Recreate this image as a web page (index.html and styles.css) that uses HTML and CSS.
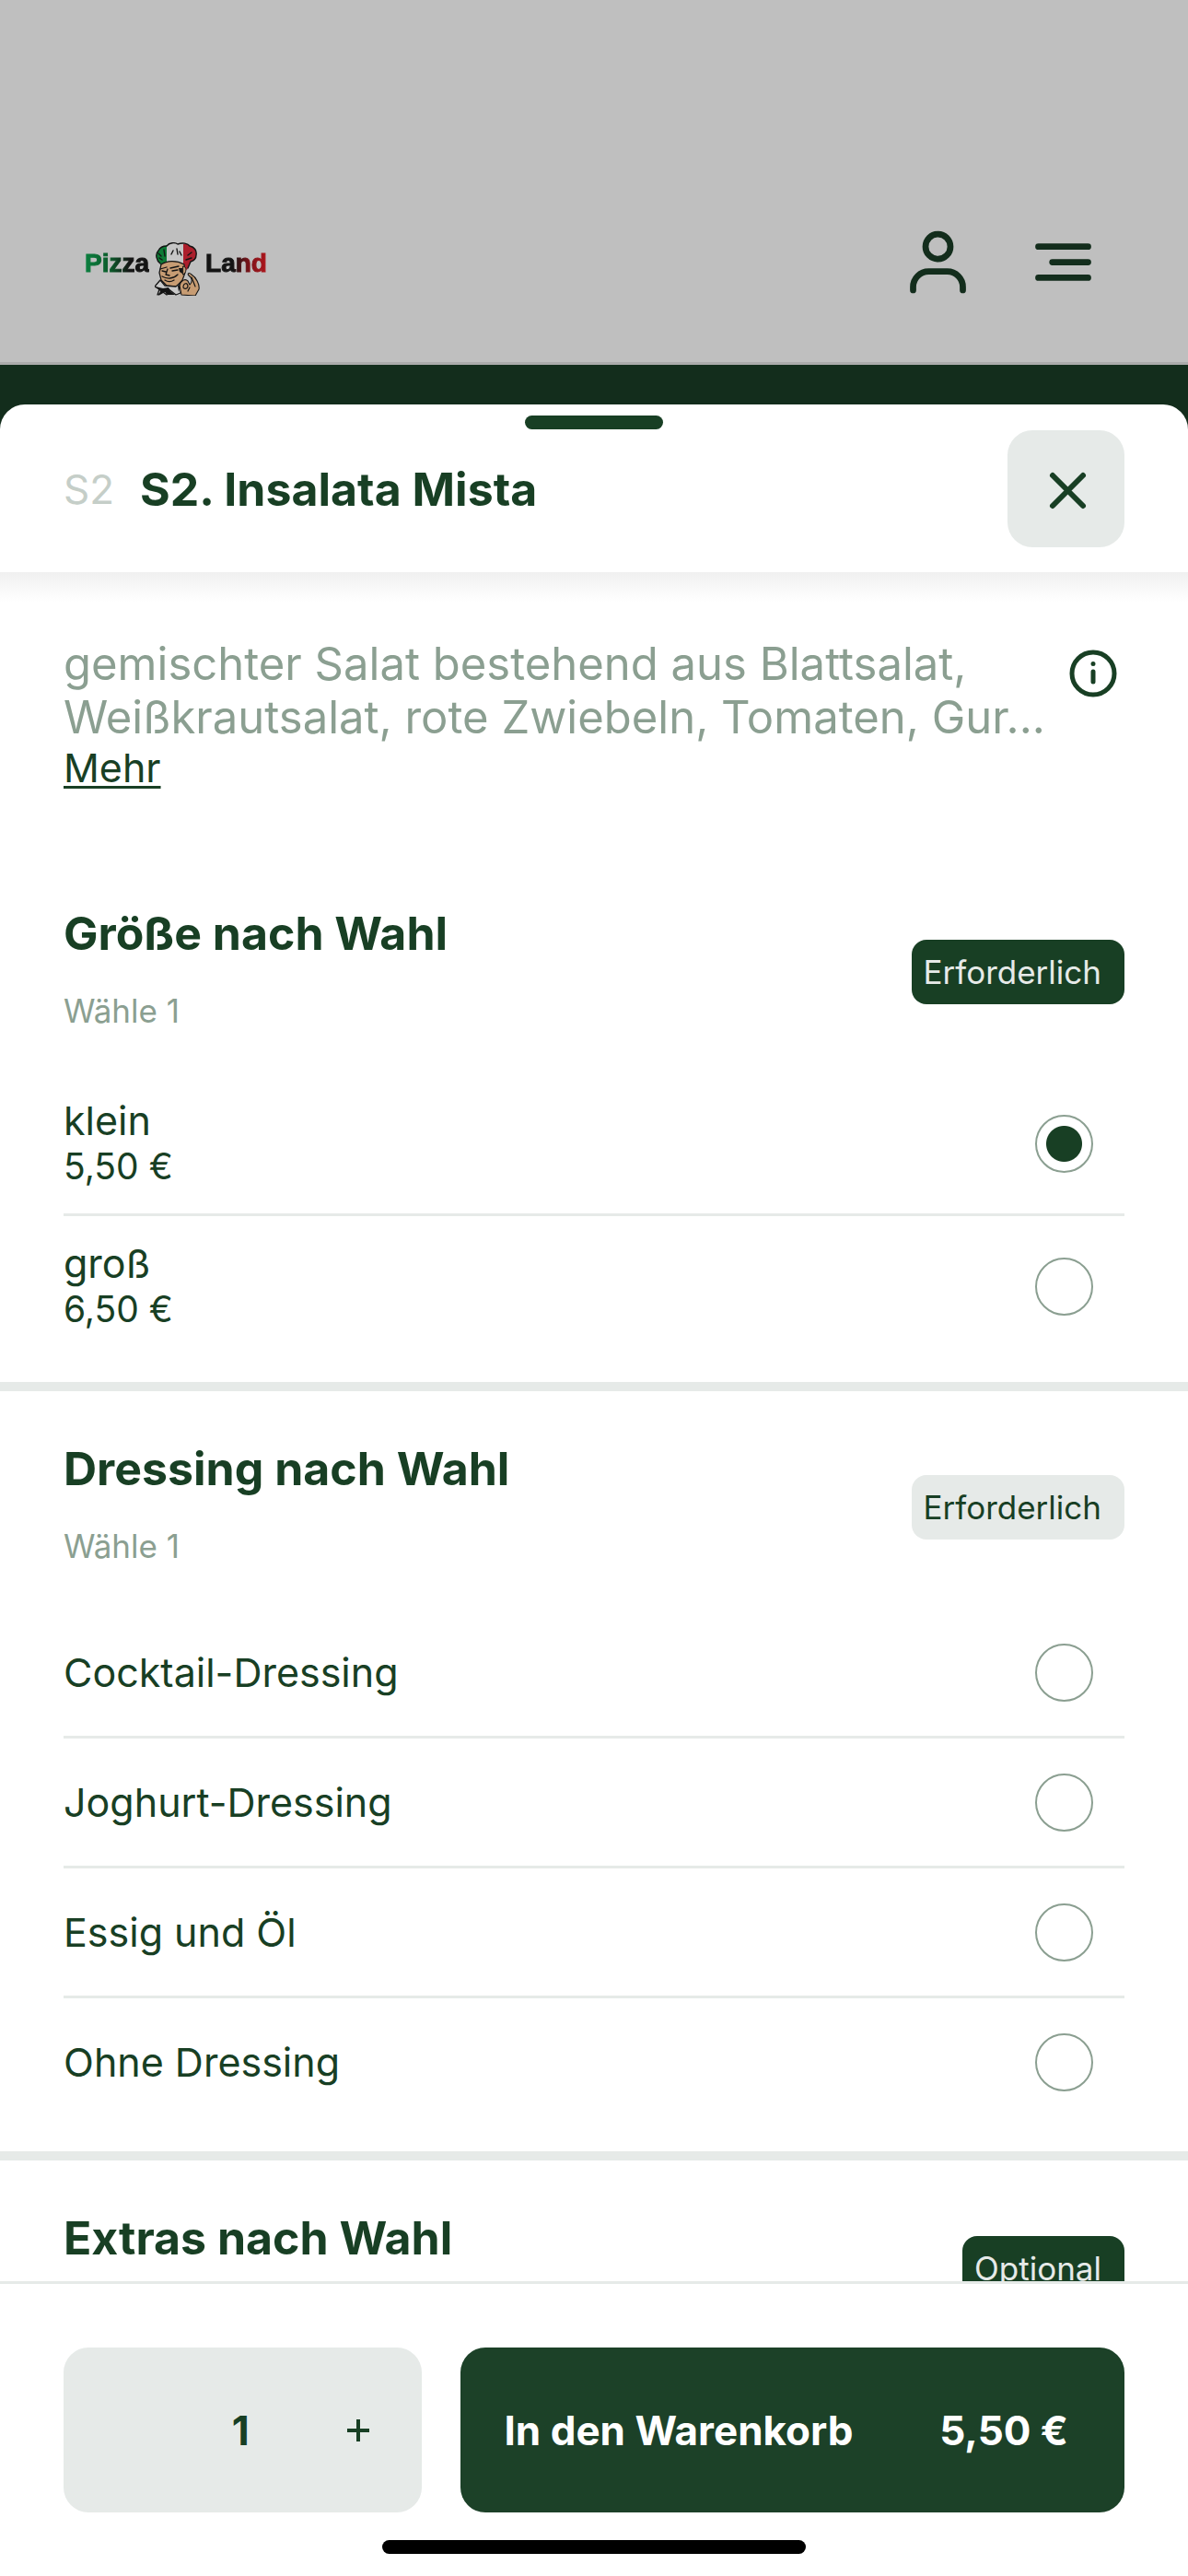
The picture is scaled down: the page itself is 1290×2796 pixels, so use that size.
FILE: index.html
```html
<!DOCTYPE html>
<html lang="de">

<head>
    <meta charset="UTF-8">
    <meta name="viewport" content="width=device-width, initial-scale=1.0">
    <title>Pizza Land</title>
    <link rel="stylesheet" href="styles.css">
</head>

<body>
    <header class="topbar">
        <a class="logo" href="#">
            <span class="logo-pizza">Pizza</span>
            <svg class="logo-chef" viewBox="0 0 49 58" aria-hidden="true">
                <!-- hat -->
                <path d="M6 23C2 20 0 13 4 9c2-4 6-5 9-5 3-4 9-4 12-2 5-2 11-1 13 2 5 1 8 5 7 10 0 4-3 6-6 7l-4 9-13-2-17 2z" fill="#c6c6c6" />
                <path d="M6 23C2 20 0 13 4 9c2-4 6-5 9-6v18l-1 1v8H7z" fill="#0c7a35" />
                <path d="M31 2c4-1 6 0 7 2 5 1 8 5 7 10 0 4-3 6-6 7l-4 9-4-2z" fill="#ac1f2c" />
                <path d="M6 23C2 20 0 13 4 9c2-4 6-5 9-5 3-4 9-4 12-2 5-2 11-1 13 2 5 1 8 5 7 10 0 4-3 6-6 7l-3 7M4 12l3 3M5 17l3 2M10 8l1 7M20 9l-2 4M24 7l1 6M27 10l2 4M40 11l-4 3M40 17l-6 2" fill="none" stroke="#141414" stroke-width="1.4" />
                <!-- face -->
                <path d="M7 24c6-4 16-5 25 0l1 9-3 8-6 7-11-1-6-6-2-8z" fill="#c79c73" stroke="#141414" stroke-width="1.2" />
                <path d="M31 26c4 0 4 7 0 9z" fill="#c79c73" stroke="#141414" />
                <path d="M6 29l7-2M17 28l9-2M8 31l4 1M19 31l6-1M14 29l-2 6 4 1M8 37c5 3 12 3 17-2M11 41c3 2 7 2 10 0" fill="none" stroke="#141414" stroke-width="1.3" />
                <path d="M26 28h4v6l-3-2z" fill="#141414" />
                <!-- collar -->
                <path d="M6 41l-6 7 5 3-2 6 6-3 4 3 1-7 9 7 5-2 2-13-7 6-12-1z" fill="#c9c9c9" stroke="#141414" stroke-width="1.3" />
                <path d="M1 48l8 2 6-1 2 4 5 4h-8l-3-3-7 4 2-5zM25 47l4-2-3 9z" fill="#141414" />
                <!-- hand -->
                <path d="M29 57l-2-10c2-6 6-8 9-5l2 4c3-3 3-7-1-10-2-2 0-4 3-1 5 3 9 11 8 16l-4 7z" fill="#c79c73" stroke="#141414" stroke-width="1.1" />
                <path d="M31 49c0-5 5-6 5-1-1 3-4 3-5 1zM40 38l4 10M38 49l-2 4" fill="none" stroke="#141414" stroke-width="1.2" />
            </svg>
            <span class="logo-land">Land</span>
        </a>
        <nav class="topbar-nav">
            <button class="icon-btn" type="button" aria-label="Konto">
                <svg viewBox="0 0 24 24"><circle cx="12" cy="7" r="4" /><path d="M4 21v-1a5 5 0 0 1 5-5h6a5 5 0 0 1 5 5v1" /></svg>
            </button>
            <button class="icon-btn" type="button" aria-label="Menü">
                <svg viewBox="0 0 24 24"><path d="M4 7h16M8.500 12H20M4 17h16" /></svg>
            </button>
        </nav>
    </header>

    <main class="sheet">
        <div class="sheet-head">
            <span class="handle"></span>
            <span class="item-no">S2</span>
            <h1>S2. Insalata Mista</h1>
            <button class="close" type="button" aria-label="Schließen">
                <svg viewBox="0 0 60 60"><path d="M15 15l33 33M48 15L15 48" /></svg>
            </button>
        </div>

        <div class="sheet-body">
            <div class="desc">
                <div class="desc-text">
                    <p>gemischter Salat bestehend aus Blattsalat, Weißkrautsalat, rote Zwiebeln, Tomaten, Gur...</p>
                    <a href="#">Mehr</a>
                </div>
                <button class="info" type="button" aria-label="Produktinfo">
                    <svg viewBox="0 0 52 52"><circle cx="26" cy="26" r="23" /><path d="M26 24v11M26 15.500v.1" /></svg>
                </button>
            </div>

            <section class="group group-first">
                <div class="group-head">
                    <div>
                        <h2>Größe nach Wahl</h2>
                        <p>Wähle 1</p>
                    </div>
                    <span class="badge badge-dark">Erforderlich</span>
                </div>
                <ul class="options options-price">
                    <li>
                        <label for="klein">klein <span>5,50 €</span></label>
                        <input type="radio" name="groesse" id="klein" checked>
                    </li>
                    <li>
                        <label for="gross">groß <span>6,50 €</span></label>
                        <input type="radio" name="groesse" id="gross">
                    </li>
                </ul>
            </section>

            <section class="group">
                <div class="group-head">
                    <div>
                        <h2>Dressing nach Wahl</h2>
                        <p>Wähle 1</p>
                    </div>
                    <span class="badge">Erforderlich</span>
                </div>
                <ul class="options">
                    <li>
                        <label for="cocktail">Cocktail-Dressing</label>
                        <input type="radio" name="dressing" id="cocktail">
                    </li>
                    <li>
                        <label for="joghurt">Joghurt-Dressing</label>
                        <input type="radio" name="dressing" id="joghurt">
                    </li>
                    <li>
                        <label for="essig">Essig und Öl</label>
                        <input type="radio" name="dressing" id="essig">
                    </li>
                    <li>
                        <label for="ohne">Ohne Dressing</label>
                        <input type="radio" name="dressing" id="ohne">
                    </li>
                </ul>
            </section>

            <section class="group">
                <div class="group-head">
                    <div>
                        <h2>Extras nach Wahl</h2>
                    </div>
                    <span class="badge badge-dark">Optional</span>
                </div>
            </section>
        </div>

        <footer class="cart-bar">
            <div class="cart-row">
                <div class="qty">
                    <button type="button" aria-label="Weniger" disabled></button>
                    <output>1</output>
                    <button type="button" aria-label="Mehr">
                        <svg viewBox="0 0 24 24"><path d="M12 0v24M0 12h24" /></svg>
                    </button>
                </div>
                <button class="add" type="button"><span>In den Warenkorb</span><span>5,50 €</span></button>
            </div>
            <div class="home-bar"></div>
        </footer>
    </main>
</body>

</html>
```
FILE: styles.css
```css
* {
    box-sizing: border-box;
    margin: 0;
    padding: 0;
}

body {
    height: 100vh;
    display: flex;
    flex-direction: column;
    background-color: #132d1c;
    color: #183f24;
    font-family: Inter, "Liberation Sans", sans-serif;
    font-size: 44px;
    line-height: 50px;
}

ul {
    list-style: none;
}

button {
    border: none;
    background: none;
    color: inherit;
    font: inherit;
    cursor: pointer;
}

svg {
    display: block;
    fill: none;
    stroke: currentColor;
    stroke-linecap: round;
    stroke-linejoin: round;
}

/* top bar */
.topbar {
    display: flex;
    justify-content: space-between;
    align-items: flex-end;
    padding: 244px 95px 68px 92px;
    background-color: #bfbfbf;
    border-bottom: 3px solid #ababab;
}

.logo {
    display: flex;
    gap: 6px;
    padding-bottom: 4px;
    font-family: "Liberation Sans", Arial, sans-serif;
    font-size: 28px;
    font-weight: bold;
    line-height: 46px;
    text-decoration: none;
}

.logo span {
    color: transparent;
    background-clip: text;
    -webkit-background-clip: text;
    -webkit-text-stroke: 1px transparent;
}

.logo .logo-pizza {
    background-image: linear-gradient(90deg, #0c8040, #0b5a2a 40%, #141414 70%);
}

.logo .logo-land {
    background-image: linear-gradient(90deg, #141414 45%, #7a1218 70%, #b0151c);
}

.logo-chef {
    width: 49px;
    height: 58px;
    stroke: none;
}

.topbar-nav {
    display: flex;
    gap: 55px;
    color: #132d1c;
}

.icon-btn svg {
    width: 81px;
    height: 81px;
    stroke-width: 2;
}

/* sheet */
.sheet {
    flex: 1;
    min-height: 0;
    display: flex;
    flex-direction: column;
    margin-top: 43px;
    background-color: #fff;
    border-radius: 27px 27px 0 0;
}

.sheet-head {
    position: relative;
    display: flex;
    align-items: center;
    padding: 28px 69px 27px;
}

/* fade under the title row */
.sheet-body {
    flex: 1;
    min-height: 0;
    overflow-y: auto;
    scrollbar-width: none;
    background: linear-gradient(#f0f0f0, #fff 32px);
}

.handle {
    position: absolute;
    top: 12px;
    left: 50%;
    width: 150px;
    height: 15px;
    margin-left: -75px;
    border-radius: 8px;
    background-color: #183f24;
}

.item-no {
    margin-right: 28px;
    color: #c5cec8;
}

h1,
h2 {
    font-size: 50px;
    font-weight: 700;
    line-height: 64px;
}

.close {
    display: flex;
    justify-content: center;
    align-items: center;
    width: 127px;
    height: 127px;
    margin-left: auto;
    border-radius: 27px;
    background-color: #e6eae8;
}

.close svg {
    width: 60px;
    height: 60px;
    stroke-width: 6;
}

.desc {
    display: flex;
    align-items: flex-start;
    padding: 71px 69px;
}

.desc-text {
    flex: 1;
}

.desc p {
    color: #8b9f91;
    font-size: 49px;
    line-height: 58px;
}

.desc a {
    display: block;
    color: inherit;
    font-size: 43px;
    text-decoration-thickness: 3px;
    text-underline-offset: 4px;
}

.info {
    display: flex;
    justify-content: center;
    align-items: center;
    width: 69px;
    height: 78px;
}

.info svg {
    width: 52px;
    height: 52px;
    stroke-width: 5;
}

/* option groups */
.group {
    padding: 52px 69px 28px;
    border-top: 10px solid #e6eae8;
}

.group-first {
    border-top: none;
}

.group-head {
    display: flex;
    justify-content: space-between;
    min-height: 130px;
    margin-bottom: 36px;
}

.group-head p {
    margin-top: 20px;
    color: #8b9f91;
    font-size: 35px;
    line-height: 64px;
}

.badge {
    align-self: center;
    padding: 0 25px 0 13px;
    border-radius: 16px;
    background-color: #e6eae8;
    font-size: 35px;
    line-height: 70px;
}

.badge-dark {
    background-color: #183f24;
    color: #e6eae8;
}

.options li {
    display: flex;
    align-items: center;
    height: 138px;
    padding-right: 34px;
}

.options li + li {
    height: 141px;
    border-top: 3px solid #e6eae8;
}

.options-price li {
    height: 152px;
}

.options-price li + li {
    height: 155px;
}

.options label {
    flex: 1;
    font-size: 43px;
}

.options label span {
    display: block;
    font-size: 39px;
}

.options input {
    appearance: none;
    width: 63px;
    height: 63px;
    border: 2px solid #8b9f91;
    border-radius: 50%;
}

.options input:checked {
    background: radial-gradient(circle, #183f24 19px, #fff 20px);
}

/* bottom bar */
.cart-bar {
    padding: 69px 69px 24px;
    border-top: 3px solid #e6eae8;
    background-color: #fff;
}

.cart-row {
    display: grid;
    grid-template-columns: 7fr 13fr;
    gap: 42px;
    height: 179px;
    font-weight: 700;
}

.qty {
    display: grid;
    grid-template-columns: 1fr 1fr 1fr;
    align-items: center;
    padding-right: 4px;
    border-radius: 27px;
    background-color: #e6eae8;
    text-align: center;
}

.qty svg {
    width: 24px;
    height: 24px;
    margin: 0 auto;
    stroke-linecap: butt;
    stroke-width: 4;
}

.add {
    display: flex;
    justify-content: space-between;
    align-items: center;
    padding: 0 61px 0 48px;
    border-radius: 27px;
    background-color: #1c4128;
    color: #fff;
}

.home-bar {
    width: 40%;
    height: 15px;
    margin: 30px auto 0;
    border-radius: 8px;
    background-color: #000;
}
```
